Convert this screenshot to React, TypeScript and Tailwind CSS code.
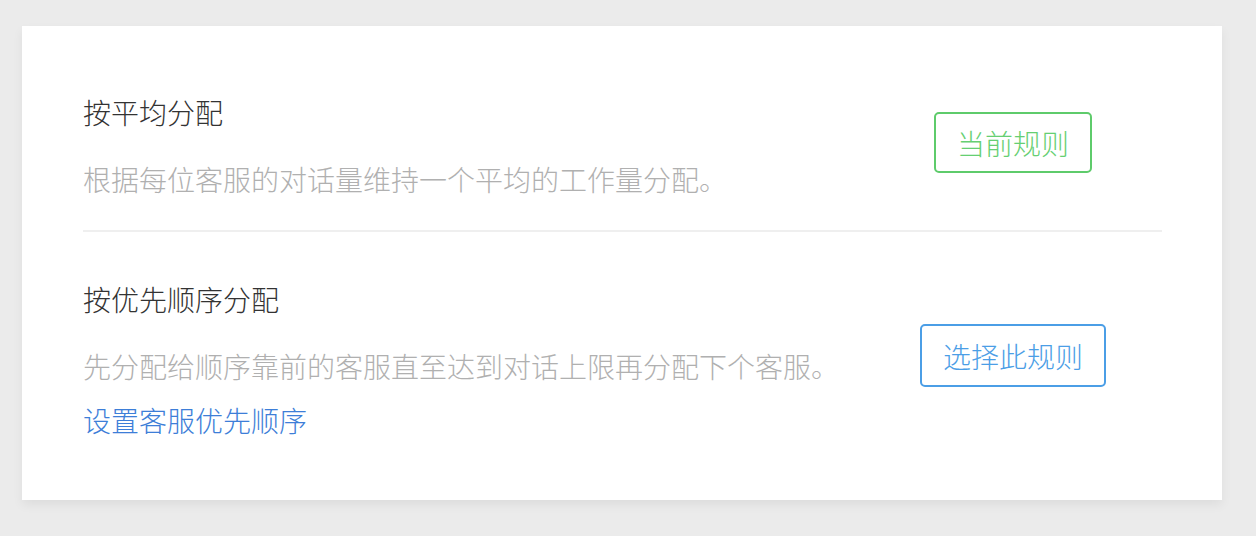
import React from "react";

const font = { fontFamily: '"Noto Sans CJK SC", sans-serif' };

export default function App() {
	return (
		<div
			className="min-h-[536px] w-full bg-[#ebebeb] pt-[26px] pl-[22px] font-light"
			style={font}
		>
			<div className="w-[1200px] bg-white pl-[61px] pr-[60px] shadow-[0_5px_10px_rgba(0,0,0,0.06)]">
				{/* rule 1 */}
				<div className="flex items-start justify-between pt-[66px] pb-[31px]">
					<div>
						<p className="text-[28px] leading-[40px] text-[#333333]">按平均分配</p>
						<p className="mt-[27px] text-[28px] leading-[40px] text-[#b0b0b0]">
							根据每位客服的对话量维持一个平均的工作量分配。
						</p>
					</div>
					<div className="flex w-[298px] justify-center">
						<button
							type="button"
							className="mt-[20px] h-[61px] rounded-[5px] border-2 border-[#5ecb6b] px-[21px] text-[28px] leading-[40px] text-[#66cf72]"
						>
							当前规则
						</button>
					</div>
				</div>

				<div className="h-[2px] bg-[#efefef]" />

				{/* rule 2 */}
				<div className="flex items-start justify-between pt-[47px] pb-[60px]">
					<div>
						<p className="text-[28px] leading-[40px] text-[#333333]">按优先顺序分配</p>
						<p className="mt-[27px] text-[28px] leading-[40px] text-[#b0b0b0]">
							先分配给顺序靠前的客服直至达到对话上限再分配下个客服。
						</p>
						<a className="mt-[14px] block cursor-pointer text-[28px] leading-[40px] text-[#3d7ed8]">
							设置客服优先顺序
						</a>
					</div>
					<div className="flex w-[298px] justify-center">
						<button
							type="button"
							className="mt-[45px] h-[63px] rounded-[5px] border-2 border-[#4b9ee6] px-[21px] text-[28px] leading-[40px] text-[#4b9ee6]"
						>
							选择此规则
						</button>
					</div>
				</div>
			</div>
		</div>
	);
}
